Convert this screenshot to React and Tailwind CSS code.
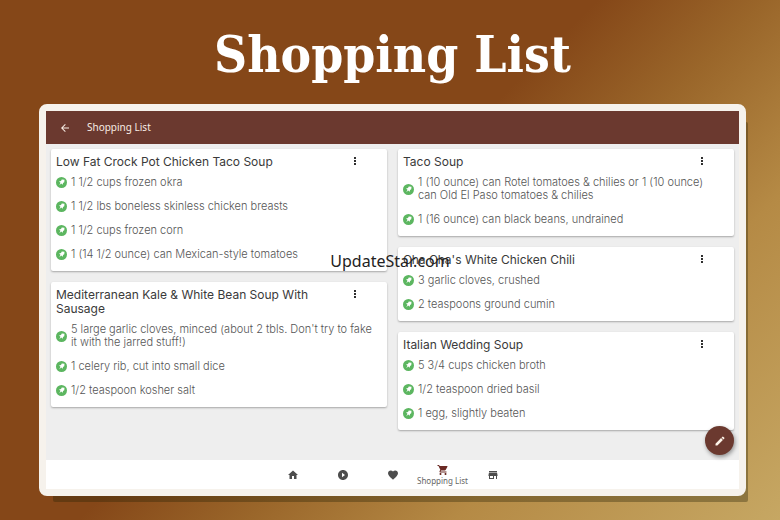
import clsx from "clsx";
import {
  MdArrowBack,
  MdEdit,
  MdFavorite,
  MdHome,
  MdMoreVert,
  MdPlayCircleFilled,
  MdShoppingCart,
  MdStore,
} from "react-icons/md";

const leftColumn = [
  {
    title: "Low Fat Crock Pot Chicken Taco Soup",
    items: [
      "1 1/2 cups frozen okra",
      "1 1/2 lbs boneless skinless chicken breasts",
      "1 1/2 cups frozen corn",
      "1 (14 1/2 ounce) can Mexican-style tomatoes",
    ],
  },
  {
    title: "Mediterranean Kale & White Bean Soup With Sausage",
    items: [
      "5 large garlic cloves, minced (about 2 tbls. Don't try to fake it with the jarred stuff!)",
      "1 celery rib, cut into small dice",
      "1/2 teaspoon kosher salt",
    ],
  },
];

const rightColumn = [
  {
    title: "Taco Soup",
    items: [
      "1 (10 ounce) can Rotel tomatoes & chilies or 1 (10 ounce) can Old El Paso tomatoes & chilies",
      "1 (16 ounce) can black beans, undrained",
    ],
  },
  {
    title: "Cha Cha's White Chicken Chili",
    items: ["3 garlic cloves, crushed", "2 teaspoons ground cumin"],
  },
  {
    title: "Italian Wedding Soup",
    items: [
      "5 3/4 cups chicken broth",
      "1/2 teaspoon dried basil",
      "1 egg, slightly beaten",
    ],
  },
];

const navItems = [
  { label: "Home", icon: MdHome },
  { label: "Videos", icon: MdPlayCircleFilled },
  { label: "Favorites", icon: MdFavorite },
  { label: "Shopping List", icon: MdShoppingCart, active: true },
  { label: "Store", icon: MdStore },
];

function PinIcon() {
  return (
    <svg viewBox="0 0 22 22" className="size-[11px] shrink-0" aria-hidden="true">
      <circle cx="11" cy="11" r="11" fill="#5cb660" />
      <path
        d="M11.500 5L17 5.500L16.500 10.500L14 12L13.500 15.500L10.500 13L6.500 16.500L9 11.500L6 9L10 8Z"
        fill="#fff"
      />
    </svg>
  );
}

function RecipeCard({ title, items }) {
  return (
    <article className="rounded-xs bg-white pt-1.5 pb-[5px] pl-[5px] shadow-[0_1px_2px_rgba(0,0,0,0.3)]">
      <div className="mb-px flex items-start justify-between pr-[26px]">
        <h2 className="max-w-[270px] text-[12px] leading-[14px] text-[#3a3a3a]">
          {title}
        </h2>
        <button aria-label={`Options for ${title}`} className="text-black">
          <MdMoreVert className="size-3" />
        </button>
      </div>
      <ul className="pr-3">
        {items.map((item) => (
          <li key={item} className="flex items-center gap-1 pt-1.5 pb-[5px]">
            <PinIcon />
            <span className="text-[11px] leading-[13px] font-light text-[#555]">
              {item}
            </span>
          </li>
        ))}
      </ul>
    </article>
  );
}

function Column({ recipes }) {
  return (
    <div className="flex flex-col gap-[11px]">
      {recipes.map((recipe) => (
        <RecipeCard key={recipe.title} {...recipe} />
      ))}
    </div>
  );
}

export default function App() {
  return (
    <main className="flex h-screen flex-col bg-[linear-gradient(135deg,#854718_0%,#854718_46%,#9a662a_59%,#b58a45_75%,#c6a763_100%)] px-[34px] pb-6 pl-[39px] font-['Inter',sans-serif]">
      <h1 className="flex h-[104px] shrink-0 items-center justify-center pt-1 text-[51px] leading-none font-bold text-white font-['DejaVu_Serif_Condensed','DejaVu_Serif',serif]">
        Shopping List
      </h1>

      <section className="relative flex min-h-0 flex-1 flex-col rounded-lg border-[7px] border-[#f6f2ec] bg-[#eee] shadow-[8px_12px_0_-6px_rgba(40,35,5,0.35)]">
        <header className="flex h-[33px] shrink-0 items-center gap-4 bg-[#6b392f] px-[13px] text-[#f7ece4]">
          <button aria-label="Back">
            <MdArrowBack className="size-3" />
          </button>
          <span className="text-[10px] font-['Noto_Sans',sans-serif]">
            Shopping List
          </span>
        </header>

        <div className="grid min-h-0 flex-1 grid-cols-2 items-start gap-[11px] px-[5px] pt-[5px]">
          <Column recipes={leftColumn} />
          <Column recipes={rightColumn} />
        </div>

        <nav className="flex h-[29px] shrink-0 items-center justify-center bg-white">
          {navItems.map(({ label, icon: Icon, active }) => (
            <a
              key={label}
              href="#"
              aria-label={label}
              className={clsx(
                "flex w-[50px] flex-col items-center",
                active ? "text-[#6b2a24]" : "text-[#4d4d4d]"
              )}
            >
              <Icon className="size-3" />
              {active && (
                <span className="text-[8px] leading-[10px] whitespace-nowrap text-[#666] font-['Noto_Sans',sans-serif]">
                  {label}
                </span>
              )}
            </a>
          ))}
        </nav>

        <button
          aria-label="Edit list"
          className="absolute right-[5px] bottom-[34px] flex size-[29px] items-center justify-center rounded-full bg-[#6b392f] text-[#fdf3e8] shadow-[1px_2px_4px_rgba(0,0,0,0.4)]"
        >
          <MdEdit className="size-3" />
        </button>
      </section>

      {/* Watermark */}
      <span className="pointer-events-none absolute inset-0 flex items-center justify-center pt-0.5 text-[16px] text-[#222] font-['Noto_Sans',sans-serif]">
        UpdateStar.com
      </span>
    </main>
  );
}
